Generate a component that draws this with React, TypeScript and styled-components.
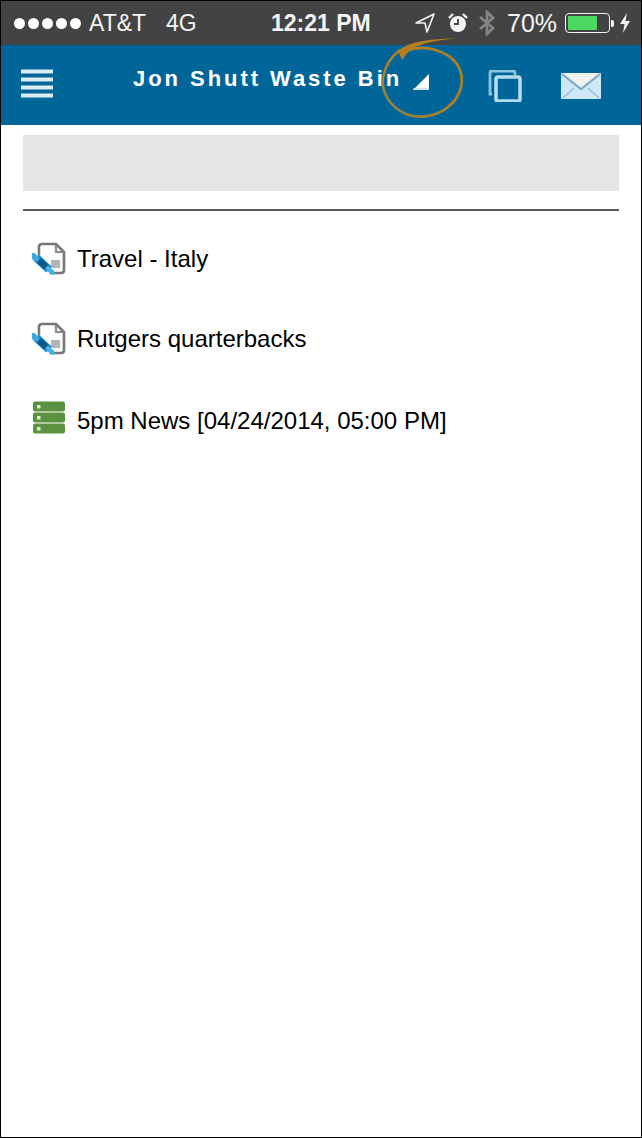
import styled, { createGlobalStyle } from 'styled-components';

const GlobalStyle = createGlobalStyle`
  html, body {
    margin: 0;
    padding: 0;
    background: #fff;
    font-family: "Liberation Sans", Arial, sans-serif;
  }
`;

const Frame = styled.div`
  position: relative;
  box-sizing: border-box;
  width: 642px;
  height: 1138px;
  border: 1px solid #000;
  overflow: hidden;
`;

const StatusBar = styled.div`
  height: 44px;
  background: #434343;
  color: #f4f4f4;
  display: flex;
  align-items: center;
  font-size: 23px;
`;

const Signal = styled.div`
  display: flex;
  gap: 3px;
  margin-left: 13px;
  margin-right: 8px;
`;

const Dot = styled.span`
  width: 11px;
  height: 11px;
  border-radius: 50%;
  background: #fff;
`;

const Carrier = styled.span`
  width: 77px;
  flex: none;
`;

const Network = styled.span`
  width: 105px;
  flex: none;
`;

const Clock = styled.span`
  font-weight: bold;
  font-size: 23px;
  width: 144px;
  flex: none;
`;

const StatusIcons = styled.div`
  display: flex;
  align-items: center;
`;

const StatusIcon = styled.svg<{ $gap?: number }>`
  flex: none;
  margin-left: ${(p) => p.$gap ?? 0}px;
`;

const Percent = styled.span`
  margin-left: 11px;
  margin-right: 8px;
  font-size: 25px;
`;

const Battery = styled.div`
  box-sizing: border-box;
  width: 45px;
  height: 20px;
  border: 1px solid #f4f4f4;
  border-radius: 4px;
  padding: 2px;
  display: flex;
`;

const BatteryLevel = styled.div<{ $level: number }>`
  width: ${(p) => p.$level}%;
  background: #4cd964;
  border-radius: 1px;
`;

const BatteryCap = styled.div`
  width: 3px;
  height: 7px;
  margin-left: 1px;
  background: #f4f4f4;
  border-radius: 0 2px 2px 0;
`;

const NavBar = styled.div`
  height: 80px;
  background: #006699;
  display: flex;
  align-items: center;
  color: #fff;
  position: relative;
`;

const MenuIcon = styled.svg`
  margin-left: 20px;
  margin-right: 79px;
  margin-top: -2px;
  flex: none;
  filter: blur(0.5px);
`;

const Title = styled.div`
  font-size: 22px;
  font-weight: bold;
  letter-spacing: 2.95px;
  margin-top: -12px;
  width: 280px;
  flex: none;
  white-space: nowrap;
`;

const Caret = styled.svg`
  flex: none;
  margin-top: -7px;
`;

const NavAction = styled.svg<{ $gap: number }>`
  flex: none;
  margin-left: ${(p) => p.$gap}px;
  margin-top: 1px;
  filter: blur(0.4px);
`;

const Annotation = styled.svg`
  position: absolute;
  left: 375px;
  top: -15px;
  pointer-events: none;
`;

const Content = styled.div`
  padding: 10px 22px 0;
`;

const SearchBlock = styled.div`
  height: 56px;
  background: #e5e5e5;
`;

const Divider = styled.div`
  height: 2px;
  background: #5a5a5a;
  margin-top: 18px;
  margin-bottom: 8px;
`;

const List = styled.div`
  display: flex;
  flex-direction: column;
`;

const Row = styled.div<{ $height: number }>`
  height: ${(p) => p.$height}px;
  display: flex;
  align-items: center;
  gap: 10px;
  padding-left: 9px;
  font-size: 24px;
  color: #000;
  white-space: nowrap;
`;

const RowIcon = styled.svg<{ $lift?: number }>`
  flex: none;
  margin-top: ${(p) => p.$lift ?? 0}px;
  filter: blur(0.7px);
`;

function NoteIcon() {
  return (
    <RowIcon width="35" height="36" viewBox="0 0 35 36">
      <path d="M7 14 L7 6 Q7 3 10 3 L24 3 L32 11 L32 29 Q32 32 29 32 L17 32" fill="#fff" stroke="#777" strokeWidth="2.6" />
      <path d="M7 14 L20 30 L17 33 L7 33 Z" fill="#fff" />
      <path d="M24 4 L24 11 L31 11" fill="none" stroke="#8a8a8a" strokeWidth="2.2" />
      <rect x="19" y="19" width="9" height="8" fill="#b5b5b5" />
      <path d="M4 16.5 L17 28.5" stroke="#1a86c8" strokeWidth="8" />
      <path d="M7 19.5 L14 26" stroke="#0d5a88" strokeWidth="6" />
      <path d="M1.5 15 L4 17.5" stroke="#3aa5e0" strokeWidth="6" strokeLinecap="round" />
      <path d="M16 27.5 L20.5 31.5" stroke="#45b4ea" strokeWidth="4.5" strokeLinecap="round" />
    </RowIcon>
  );
}

function StackIcon() {
  return (
    <RowIcon $lift={-3} width="35" height="36" viewBox="0 0 35 36">
      <rect x="1" y="0.5" width="32" height="10" rx="2" fill="#5b923f" />
      <rect x="1" y="11.5" width="32" height="10" rx="2" fill="#5b923f" />
      <rect x="1" y="22.5" width="32" height="10" rx="2" fill="#5b923f" />
      <rect x="5" y="4" width="3.5" height="3.5" fill="#dcebd2" />
      <rect x="5" y="15" width="3.5" height="3.5" fill="#dcebd2" />
      <rect x="5" y="26" width="3.5" height="3.5" fill="#dcebd2" />
    </RowIcon>
  );
}

const items = [
  { label: 'Travel - Italy', icon: <NoteIcon />, height: 80 },
  { label: 'Rutgers quarterbacks', icon: <NoteIcon />, height: 80 },
  { label: '5pm News [04/24/2014, 05:00 PM]', icon: <StackIcon />, height: 83 },
];

export default function App() {
  return (
    <Frame>
      <GlobalStyle />
      <StatusBar>
        <Signal>
          {[0, 1, 2, 3, 4].map((i) => (
            <Dot key={i} />
          ))}
        </Signal>
        <Carrier>AT&amp;T</Carrier>
        <Network>4G</Network>
        <Clock>12:21 PM</Clock>
        <StatusIcons>
          <StatusIcon width="20" height="20" viewBox="0 0 20 20">
            <path d="M1 10 L19 1 L12 19 L10 10 Z" fill="none" stroke="#f4f4f4" strokeWidth="1.6" strokeLinejoin="round" />
          </StatusIcon>
          <StatusIcon $gap={12} width="22" height="22" viewBox="0 0 22 22">
            <circle cx="11" cy="12" r="8" fill="#f4f4f4" />
            <path d="M11 7 L11 12 L7 12" fill="none" stroke="#434343" strokeWidth="1.8" />
            <path d="M2 6 L6 2 M16 2 L20 6" stroke="#f4f4f4" strokeWidth="2.4" />
          </StatusIcon>
          <StatusIcon $gap={9} width="18" height="26" viewBox="0 0 18 26">
            <path d="M2 7 L15 18 L9 24 L9 2 L15 8 L2 19" fill="none" stroke="#858585" strokeWidth="2.8" />
          </StatusIcon>
          <Percent>70%</Percent>
          <Battery>
            <BatteryLevel $level={73} />
          </Battery>
          <BatteryCap />
          <StatusIcon $gap={5} width="12" height="20" viewBox="0 0 12 20">
            <path d="M8 0 L1 11 L5.5 11 L4 20 L11 8 L6.5 8 Z" fill="#f4f4f4" />
          </StatusIcon>
        </StatusIcons>
      </StatusBar>
      <NavBar>
        <MenuIcon width="33" height="31" viewBox="0 0 33 31">
          <path d="M0 2.5 H32 M0 10.5 H32 M0 18.5 H32 M0 26.5 H32" stroke="#dcecf4" strokeWidth="4" />
        </MenuIcon>
        <Title>Jon Shutt Waste Bin</Title>
        <Caret width="16" height="16" viewBox="0 0 16 16">
          <path d="M0 16 L16 0 L16 16 Z" fill="#fff" />
          <path d="M0.5 15 H16" stroke="#cfe3ef" strokeWidth="2" />
        </Caret>
        <NavAction $gap={59} width="35" height="32" viewBox="0 0 35 32">
          <path d="M4 24 L2 24 L2 3 Q2 1 4 1 L25 1 Q27 1 27 3 L27 5" fill="none" stroke="#8ec5de" strokeWidth="2.8" />
          <rect x="8" y="7" width="24" height="24" rx="2" fill="none" stroke="#b5dcee" strokeWidth="3.6" />
        </NavAction>
        <NavAction $gap={37} width="42" height="26" viewBox="0 0 42 26">
          <rect x="1" y="0" width="40" height="26" rx="1" fill="#cfe8f6" />
          <path d="M1 0 L41 0 L21 16 Z" fill="#f2f2f2" />
          <path d="M2 1 L21 16 L40 1" fill="none" stroke="#7fa9c0" strokeWidth="2.2" />
          <path d="M3 25 L14 15 M39 25 L28 15" stroke="#8fc0da" strokeWidth="1.4" />
        </NavAction>
        <Annotation width="95" height="95" viewBox="0 0 95 95">
          <defs>
            <linearGradient id="inkFade" x1="0" y1="1" x2="1" y2="0">
              <stop offset="0" stopColor="#8c8447" />
              <stop offset="0.5" stopColor="#b57f1f" />
            </linearGradient>
          </defs>
          <path
            d="M30 21 C50 13 72 22 81 34 C90 48 86 66 72 77 C60 87 42 89 30 84 C14 77 5 62 7 48 C9 36 16 26 24 20"
            fill="none"
            stroke="url(#inkFade)"
            strokeWidth="2.6"
            strokeLinecap="round"
          />
          <path d="M22 21 C32 12 52 9 78 8.5 C56 11 42 14 33 21 L26 30 Z" fill="#b57f1f" />
        </Annotation>
      </NavBar>
      <Content>
        <SearchBlock />
        <Divider />
        <List>
          {items.map((item) => (
            <Row key={item.label} $height={item.height}>
              {item.icon}
              <span>{item.label}</span>
            </Row>
          ))}
        </List>
      </Content>
    </Frame>
  );
}
